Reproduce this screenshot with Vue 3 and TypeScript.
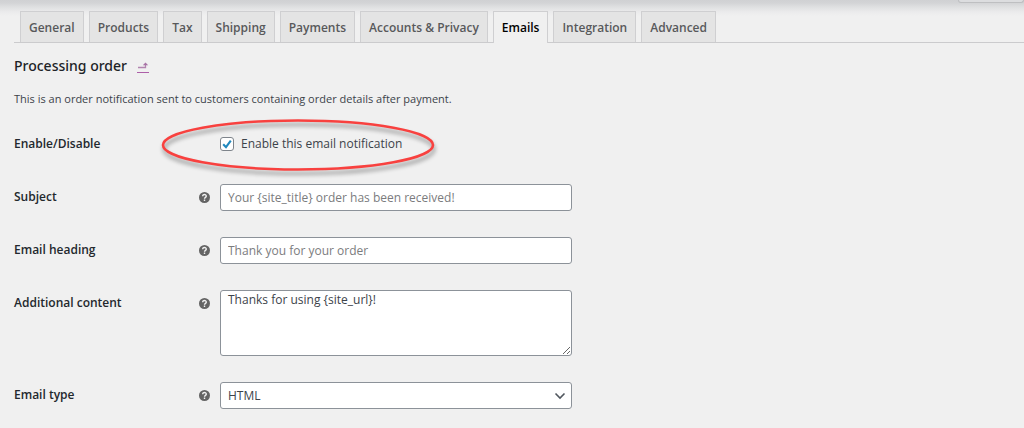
<script setup lang="ts">
import { ref } from 'vue'

interface Tab {
  id: string
  label: string
}

const tabs: Tab[] = [
  { id: 'general', label: 'General' },
  { id: 'products', label: 'Products' },
  { id: 'tax', label: 'Tax' },
  { id: 'shipping', label: 'Shipping' },
  { id: 'payments', label: 'Payments' },
  { id: 'accounts', label: 'Accounts & Privacy' },
  { id: 'emails', label: 'Emails' },
  { id: 'integration', label: 'Integration' },
  { id: 'advanced', label: 'Advanced' },
]

const activeTab = ref('emails')
const enabled = ref(true)
const subject = ref('')
const heading = ref('')
const additional = ref('Thanks for using {site_url}!')
const emailType = ref('html')
const help = 'M8 0a8 8 0 1 0 0 16A8 8 0 0 0 8 0z'
const mark = 'M5.4 6.1C5.4 2.7 10.7 2.9 10.6 6C10.5 7.9 8 7.6 8 9.8M8 11V13'
</script>

<template>
  <div class="page">
    <div class="topbar"><span class="screen-tab"></span></div>

    <nav class="tabs" aria-label="Settings sections">
      <a
        v-for="tab in tabs"
        :key="tab.id"
        :href="'#' + tab.id"
        class="tab"
        :class="{ active: tab.id === activeTab }"
        @click.prevent="activeTab = tab.id"
      >{{ tab.label }}</a>
    </nav>

    <main class="content">
      <h2 class="title">
        Processing order
        <a href="#emails" class="back" aria-label="Return to emails">
          <svg viewBox="0 0 12 12" width="12" height="12">
            <path d="M1 5.5H8.5V2.5" fill="none" stroke="#b285b0" stroke-width="1.3" />
            <path d="M5.8 3.2L8.5 .4L11.2 3.2z" fill="#a772a5" />
            <path d="M0 10.5H12" stroke="#ad5fa8" stroke-width="1" />
          </svg>
        </a>
      </h2>
      <p class="description">This is an order notification sent to customers containing order details after payment.</p>

      <form class="form" @submit.prevent>
        <div class="row">
          <span class="name">Enable/Disable</span>
          <span class="tip"></span>
          <div class="control">
            <label class="check">
              <input v-model="enabled" type="checkbox" class="box" />
              <svg v-if="enabled" class="tick" viewBox="0 0 14 14" width="14" height="14">
                <path d="M3.2 7.2L6 10.2L10.8 3.6" fill="none" stroke="#2188be" stroke-width="2.1" />
              </svg>
              <span>Enable this email notification</span>
            </label>
            <svg class="ring" viewBox="0 0 284 64" width="284" height="64" aria-hidden="true">
              <ellipse cx="141" cy="29" rx="135" ry="24.5" fill="none" stroke="#f8413f" stroke-width="2.6" />
            </svg>
          </div>
        </div>

        <div class="row">
          <label class="name" for="subject">Subject</label>
          <span class="tip">
            <svg viewBox="0 0 16 16" width="11" height="11">
              <path :d="help" fill="#646464" />
              <path :d="mark" fill="none" stroke="#f1f1f1" stroke-width="2" />
            </svg>
          </span>
          <input id="subject" v-model="subject" class="field" type="text" placeholder="Your {site_title} order has been received!" />
        </div>

        <div class="row">
          <label class="name" for="heading">Email heading</label>
          <span class="tip">
            <svg viewBox="0 0 16 16" width="11" height="11">
              <path :d="help" fill="#646464" />
              <path :d="mark" fill="none" stroke="#f1f1f1" stroke-width="2" />
            </svg>
          </span>
          <input id="heading" v-model="heading" class="field" type="text" placeholder="Thank you for your order" />
        </div>

        <div class="row">
          <label class="name" for="additional">Additional content</label>
          <span class="tip">
            <svg viewBox="0 0 16 16" width="11" height="11">
              <path :d="help" fill="#646464" />
              <path :d="mark" fill="none" stroke="#f1f1f1" stroke-width="2" />
            </svg>
          </span>
          <textarea id="additional" v-model="additional" class="field area"></textarea>
        </div>

        <div class="row">
          <label class="name" for="email-type">Email type</label>
          <span class="tip">
            <svg viewBox="0 0 16 16" width="11" height="11">
              <path :d="help" fill="#646464" />
              <path :d="mark" fill="none" stroke="#f1f1f1" stroke-width="2" />
            </svg>
          </span>
          <div class="select-wrap">
            <select id="email-type" v-model="emailType" class="field select">
              <option value="plain">Plain text</option>
              <option value="html">HTML</option>
              <option value="multipart">Multipart</option>
            </select>
            <svg class="chevron" viewBox="0 0 12 8" width="12" height="8">
              <path d="M1.5 1.5L6 6L10.5 1.5" fill="none" stroke="#50575e" stroke-width="1.6" />
            </svg>
          </div>
        </div>
      </form>
    </main>
  </div>
</template>

<style>
body {
  background: #f0f0f0;
}
</style>

<style scoped>
.page {
  position: relative;
  font-family: "Open Sans", "Noto Sans", sans-serif;
  font-size: 12px;
  line-height: 16px;
  color: #3c434a;
}

.topbar {
  position: absolute;
  inset: 0 0 auto 0;
  display: flex;
  justify-content: flex-end;
  align-items: flex-start;
  height: 16px;
  background: linear-gradient(#d0d1d3 0, #d3d4d6 3px, #dfe0e1 7px, #ebebec 12px, #f0f0f0 16px);
}

.screen-tab {
  box-sizing: border-box;
  width: 66px;
  height: 3px;
  border: 1px solid #bebfc1;
  border-top: 0;
  border-radius: 0 0 3px 3px;
  background: #dcdddf;
}

.tabs {
  position: relative;
  display: flex;
  gap: 5px;
  margin-left: 14px;
  padding: 11px 0 0 6px;
  border-bottom: 1px solid #cbcbcd;
}

.tab {
  padding: 8px 8px 6px;
  border: 1px solid #cfcfd1;
  border-bottom: 0;
  background: #e4e4e4;
  color: #58595b;
  font-weight: 600;
  text-decoration: none;
  white-space: nowrap;
}

.tab.active {
  margin-bottom: -1px;
  padding-bottom: 7px;
  background: #f0f0f0;
  color: #000;
}

.content {
  padding: 13px 14px 20px;
}

.title {
  display: flex;
  align-items: center;
  gap: 10px;
  margin: 0;
  font-family: "Noto Sans", sans-serif;
  font-size: 14px;
  line-height: 20px;
  font-weight: 500;
  color: #1d2327;
}

.back {
  display: flex;
  margin-top: 4px;
}

.description {
  margin: 15px 0 24px;
  font-size: 11px;
}

.form {
  display: flex;
  flex-direction: column;
  gap: 26px;
}

.row {
  display: grid;
  grid-template-columns: 185px 21px minmax(0, 352px);
  align-items: start;
}

.name {
  padding-top: 5px;
  font-weight: 600;
  color: #23282d;
}

.tip {
  display: flex;
  padding-top: 8px;
}

.control {
  position: relative;
  height: 27px;
}

.check {
  position: relative;
  display: flex;
  align-items: center;
  gap: 7px;
  width: max-content;
  height: 26px;
}

.box {
  appearance: none;
  box-sizing: border-box;
  width: 14px;
  height: 14px;
  margin: 0;
  border: 1px solid #7e848b;
  border-radius: 3px;
  background: #fff;
}

.tick {
  position: absolute;
  left: 0;
  pointer-events: none;
}

.ring {
  position: absolute;
  left: -63px;
  top: -15px;
  overflow: visible;
  pointer-events: none;
  filter: drop-shadow(1px 4px 2px rgba(0, 0, 0, 0.4));
}

.field {
  box-sizing: border-box;
  display: block;
  width: 100%;
  height: 27px;
  margin: 0;
  padding: 0 7px;
  border: 1px solid #8c9299;
  border-radius: 3px;
  background: #fff;
  color: #3c434a;
  font: inherit;
}

.field::placeholder {
  color: #7b7c7e;
  opacity: 1;
}

.area {
  height: 66px;
  padding: 1px 7px;
  resize: vertical;
}

.select-wrap {
  position: relative;
}

.select {
  appearance: none;
}

.chevron {
  position: absolute;
  right: 6px;
  top: 10px;
  pointer-events: none;
}
</style>
